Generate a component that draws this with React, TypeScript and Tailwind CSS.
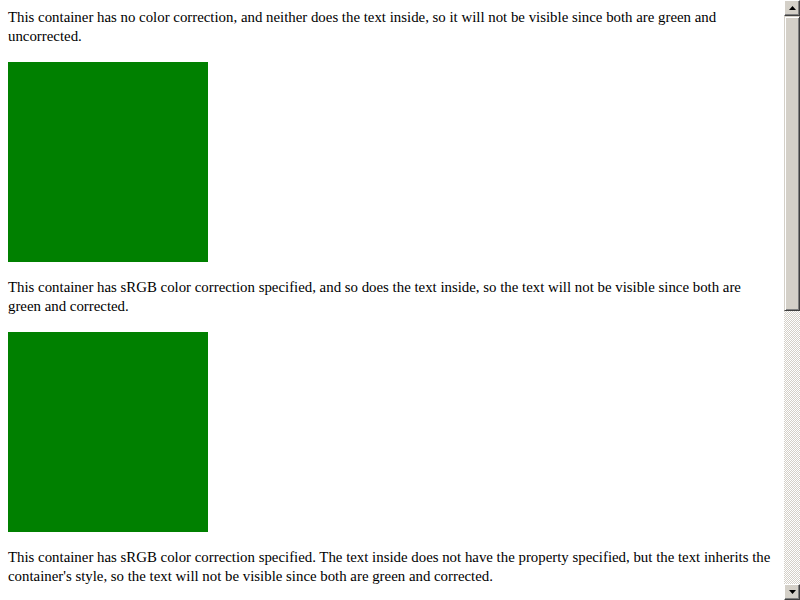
import React from "react";

const Btn = ({ up }: { up?: boolean }) => (
  <div className="h-4 w-4 bg-[#d4d0c8] border-t border-l border-t-white border-l-white border-r border-b border-r-[#404040] border-b-[#404040] flex items-center justify-center shadow-[inset_-1px_-1px_0_#808080]">
    <svg width="7" height="4" viewBox="0 0 7 4">
      {up ? <polygon points="3.5,0 7,4 0,4" fill="#000" /> : <polygon points="0,0 7,0 3.5,4" fill="#000" />}
    </svg>
  </div>
);

const sections = [
  "This container has no color correction, and neither does the text inside, so it will not be visible since both are green and uncorrected.",
  "This container has sRGB color correction specified, and so does the text inside, so the text will not be visible since both are green and corrected.",
  "This container has sRGB color correction specified. The text inside does not have the property specified, but the text inherits the container's style, so the text will not be visible since both are green and corrected.",
];

export default function App() {
  return (
    <div className="w-[800px] h-[600px] overflow-hidden flex bg-white">
      <div className="flex-1 p-2 flex flex-col gap-4 font-['Liberation_Serif',serif] text-[14.85px] leading-[19px] text-black">
        {sections.map((t, i) => (
          <React.Fragment key={i}>
            <div>{t}</div>
            <div className="w-[200px] h-[200px] shrink-0 bg-[#008000]" />
          </React.Fragment>
        ))}
      </div>
      <div className="w-4 h-full flex flex-col bg-[repeating-conic-gradient(#d4d0c8_0_25%,#ffffff_0_50%)] bg-[length:2px_2px]">
        <Btn up />
        <div className="h-[295px] bg-[#d4d0c8] border-t border-l border-t-[#d4d0c8] border-l-[#d4d0c8] border-r border-b border-r-[#404040] border-b-[#404040] shadow-[inset_1px_1px_0_#ffffff,inset_-1px_-1px_0_#808080]" />
        <div className="flex-1" />
        <Btn />
      </div>
    </div>
  );
}
